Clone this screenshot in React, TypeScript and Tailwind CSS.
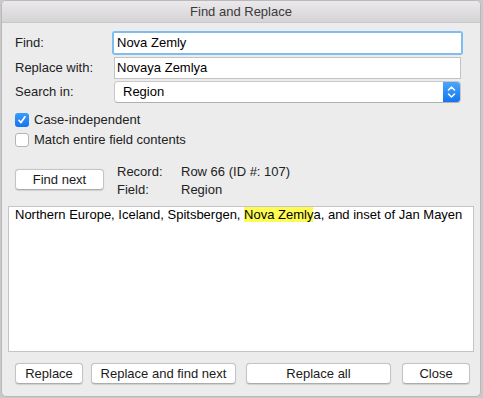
import React from "react";

const font = { fontFamily: '"Liberation Sans", Arial, sans-serif' };

function Btn({ children, className = "" }: { children: React.ReactNode; className?: string }) {
  return (
    <div
      className={`flex h-[21px] items-center justify-center rounded-[4px] border border-[#c4c4c4] border-b-[#acacac] bg-white text-[13px] leading-[16px] text-[#1a1a1a] shadow-[0_0.5px_1px_rgba(0,0,0,0.12)] ${className}`}
    >
      {children}
    </div>
  );
}

export default function App() {
  return (
    <div className="h-[398px] w-[483px] overflow-hidden bg-[#c9c9c9] text-[13px] leading-[16px]" style={font}>
      <div className="ml-[1px] h-[397px] w-[480px] overflow-hidden rounded-[5px] border border-[#b9b9b9] bg-[#ececec]">
        {/* title bar */}
        <div className="flex h-[22px] items-center justify-center border-b border-[#c8c8c8] bg-gradient-to-b from-[#ebe9eb] to-[#d5d3d5] text-[13px] text-[#3a3a3a]">
          Find and Replace
        </div>

        <div className="pl-[13px] pr-[17px] pt-[8px]">
          {/* form rows */}
          <div className="grid grid-cols-[97px_1fr] items-center gap-y-[2px]">
            <div className="text-[#222]">Find:</div>
            <div className="rounded-[3px] bg-[#7fbdf0] p-[2px]">
              <div className="flex h-[20px] items-center bg-white px-[3px] text-black">Nova Zemly</div>
            </div>
            <div className="text-[#222]">Replace with:</div>
            <div className="mx-[2px] flex h-[22px] items-center border border-[#c3c3c3] bg-white px-[2px] text-black">
              Novaya Zemlya
            </div>
            <div className="text-[#222]">Search in:</div>
            <div className="mx-[2px] flex h-[22px] items-center overflow-hidden rounded-[4px] border border-[#c8c8c8] border-b-[#b0b0b0] bg-white text-black">
              <div className="flex-1 pl-[8px]">Region</div>
              <div className="flex h-full w-[17px] items-center justify-center bg-gradient-to-b from-[#4aa6fb] to-[#1374f0]">
                <svg width="9" height="14" viewBox="0 0 9 14" fill="none" stroke="white" strokeWidth="1.5" strokeLinecap="round" strokeLinejoin="round">
                  <path d="M1.5 5 L4.5 2 L7.5 5" />
                  <path d="M1.5 9 L4.5 12 L7.5 9" />
                </svg>
              </div>
            </div>
          </div>

          {/* checkboxes */}
          <div className="mt-[9px] flex flex-col gap-[4px]">
            <div className="flex h-[16px] items-center gap-[5px] text-[#222]">
              <div className="flex h-[14px] w-[14px] items-center justify-center rounded-[3px] bg-gradient-to-b from-[#3d9bfb] to-[#1473f0]">
                <svg width="10" height="10" viewBox="0 0 10 10" fill="none" stroke="white" strokeWidth="1.7" strokeLinecap="round" strokeLinejoin="round">
                  <path d="M2 5.3 L4 7.6 L8 1.8" />
                </svg>
              </div>
              Case-independent
            </div>
            <div className="flex h-[16px] items-center gap-[5px] text-[#222]">
              <div className="h-[14px] w-[14px] rounded-[3px] border border-[#b5b5b5] bg-white" />
              Match entire field contents
            </div>
          </div>

          {/* find next + record */}
          <div className="mt-[16px] flex items-start">
            <Btn className="mt-[5px] w-[89px]">Find next</Btn>
            <div className="ml-[13px] grid grid-cols-[64px_auto] gap-y-[2px] text-[#222]">
              <div>Record:</div>
              <div>Row 66 (ID #: 107)</div>
              <div>Field:</div>
              <div>Region</div>
            </div>
          </div>
        </div>

        {/* text area */}
        <div className="mx-[6px] mt-[8px] h-[146px] border border-[#c4c4c4] bg-white px-[6px] pt-0 text-black">
          Northern Europe, Iceland, Spitsbergen, <span className="bg-[#fdfb54]">Nova Zemly</span>a, and inset of Jan Mayen
        </div>

        {/* bottom buttons */}
        <div className="mt-[11px] flex pl-[13px]">
          <Btn className="w-[68px]">Replace</Btn>
          <Btn className="ml-[8px] w-[145px]">Replace and find next</Btn>
          <Btn className="ml-[10px] w-[145px]">Replace all</Btn>
          <Btn className="ml-[11px] w-[68px]">Close</Btn>
        </div>
      </div>
    </div>
  );
}
